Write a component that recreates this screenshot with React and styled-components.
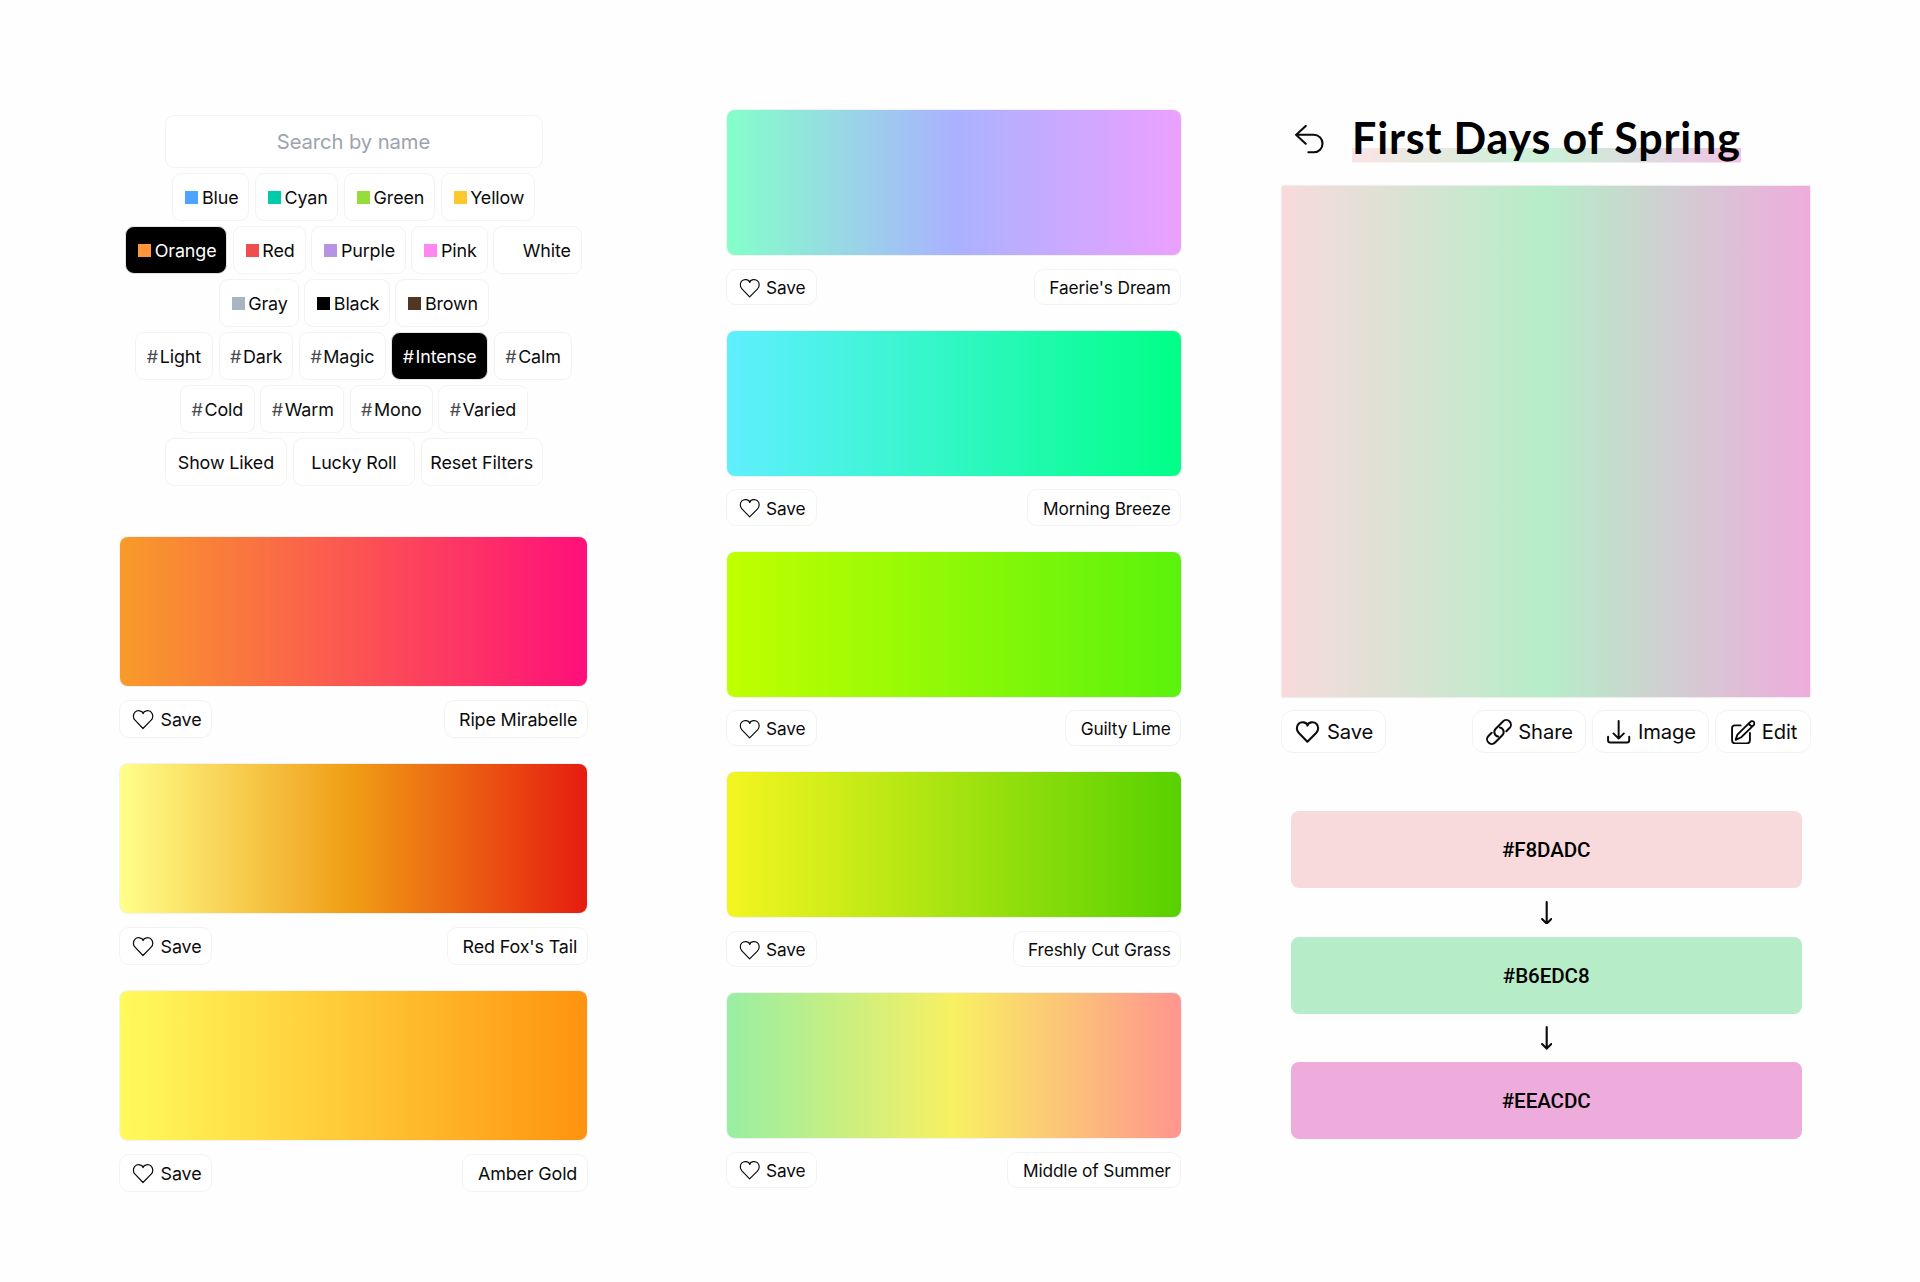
import React from "react";
import styled, { createGlobalStyle, css } from "styled-components";

const GlobalStyle = createGlobalStyle`
  *, *::before, *::after { box-sizing: border-box; }
  body {
    margin: 0;
    background: #fefefe;
    color: #0b0b0c;
    font-family: Inter, "Liberation Sans", sans-serif;
  }
  button, input { font: inherit; color: inherit; margin: 0; }
`;

const Page = styled.main`
  display: grid;
  grid-template-columns: 505.5px 453.5px 528.4px;
  column-gap: 101.5px;
  justify-content: start;
  align-items: start;
  height: 1282px;
  padding-left: 120px;
  overflow: hidden;
`;

const outlined = css`
  border: 1px solid #f3f3f4;
  background: #fff;
`;

/* ---------- Filters ---------- */

const BrowseColumn = styled.section`
  display: flex;
  flex-direction: column;
  width: 467px;
  padding-top: 115px;
`;

const Filters = styled.div`
  display: flex;
  flex-direction: column;
  align-items: center;
  gap: 5.6px;
  margin-bottom: 51.5px;
`;

const SearchInput = styled.input`
  ${outlined}
  width: 378px;
  height: 52.8px;
  border-radius: 9px;
  padding: 0;
  text-align: center;
  font-size: 20.2px;
  letter-spacing: -0.08px;
  outline: none;
  &::placeholder { color: #9ca3af; opacity: 1; }
`;

const FilterRow = styled.div`
  display: flex;
  gap: 5.6px;
  margin-left: 0.6px;
`;

const Chip = styled.button`
  ${outlined}
  display: flex;
  align-items: center;
  flex: none;
  justify-content: ${(p) => (p.$centered ? "center" : "flex-start")};
  width: ${(p) => p.$width}px;
  height: 47.4px;
  padding: 1px 0 0 ${(p) => (p.$centered ? 0 : p.$tag ? 8.8 : 12)}px;
  border-radius: 9px;
  font-size: 17.9px;
  letter-spacing: -0.12px;
  white-space: nowrap;
  ${(p) =>
    p.$active &&
    css`
      background: #000;
      border-color: #e4e4e6;
      color: #fff;
    `}
`;

const Swatch = styled.span`
  width: 13px;
  height: 13px;
  margin-right: 3.6px;
  margin-top: -1px;
  background: ${(p) => p.$color};
`;

const Hash = styled.span`
  width: 14.6px;
  color: ${(p) => (p.$active ? "#fff" : "#4b4b4f")};
`;

/* ---------- Gradient cards ---------- */

const CardList = styled.div`
  display: flex;
  flex-direction: column;
  gap: ${(p) => (p.$compact ? 25.9 : 26.3)}px;
  padding-top: ${(p) => (p.$compact ? 110.3 : 0)}px;
`;

const Card = styled.article`
  display: flex;
  flex-direction: column;
  gap: ${(p) => (p.$compact ? 13.5 : 13.8)}px;
`;

const Preview = styled.div`
  height: ${(p) => (p.$compact ? 145 : 149.2)}px;
  border-radius: 8px;
  background: ${(p) => p.$gradient};
  box-shadow: 0 0 1.5px rgba(0, 0, 0, 0.25);
`;

const CardBar = styled.div`
  display: flex;
  justify-content: space-between;
  margin: 0 -0.8px;
`;

const CardButton = styled.button`
  ${outlined}
  display: flex;
  align-items: center;
  gap: ${(p) => (p.$compact ? 2.8 : 3.6)}px;
  height: ${(p) => (p.$compact ? 36.3 : 37.7)}px;
  padding: 1px ${(p) => (p.$icon ? 10 : 9.6)}px 0 ${(p) => (p.$icon ? 8.6 : 14.5)}px;
  border-radius: 10px;
  font-size: ${(p) => (p.$compact ? 17.3 : 17.9)}px;
  letter-spacing: -0.13px;
  white-space: nowrap;
`;

/* ---------- Detail ---------- */

const DetailColumn = styled.section`
  padding-top: 111px;
  display: flex;
  flex-direction: column;
`;

const TitleRow = styled.header`
  display: flex;
  align-items: flex-start;
  height: 75.3px;
  padding-left: 13px;
`;

const BackButton = styled.button`
  border: 0;
  padding: 14px 0 0;
  background: none;
  margin-right: 28.5px;
  display: flex;
`;

const Title = styled.h1`
  margin: 0;
  width: 388.6px;
  height: 51.5px;
  font: 700 43px/53px Lato, sans-serif;
  letter-spacing: 0.82px;
  color: #000;
  white-space: nowrap;
  background: linear-gradient(90deg, #f8dadcb8, #b6edc8b8, #eeacdcb8) no-repeat 0 100% / 100% 14.5px;
`;

const BigPreview = styled.div`
  height: 511px;
  background: linear-gradient(90deg, #f8dadc, #b6edc8, #eeacdc);
  box-shadow: 0 0 2px rgba(0, 0, 0, 0.2);
`;

const ActionBar = styled.div`
  display: flex;
  gap: 6.3px;
  margin: 12.7px -0.6px 58.7px -0.9px;
`;

const ActionButton = styled.button`
  ${outlined}
  display: flex;
  align-items: center;
  flex: none;
  gap: ${(p) => p.$gap}px;
  width: ${(p) => p.$width}px;
  height: 42.7px;
  padding: 1px 0 0 ${(p) => p.$inset}px;
  border-radius: 12px;
  font-size: 20.2px;
  letter-spacing: -0.12px;
  white-space: nowrap;
  &:first-child { margin-right: auto; }
`;

const Stops = styled.div`
  display: flex;
  flex-direction: column;
  align-items: center;
  padding: 0 8.6px;
`;

const Stop = styled.div`
  display: flex;
  align-items: center;
  justify-content: center;
  width: 100%;
  height: 77px;
  padding-top: 1px;
  border-radius: 8px;
  background: ${(p) => p.$color};
  font: 500 20.6px/24px Roboto, sans-serif;
  letter-spacing: -0.1px;
  color: #000;
`;

const StopArrow = styled.div`
  display: flex;
  align-items: center;
  height: 48.5px;
`;

const Icon = styled.svg.attrs({ preserveAspectRatio: "none" })`
  display: block;
  flex: none;
  fill: none;
  stroke: currentColor;
  stroke-linecap: round;
  stroke-linejoin: round;
`;

const HeartIcon = ({ size, stroke }) => (
  <Icon width={size} height={size} viewBox="0 0 21 21" strokeWidth={stroke}>
    <path d="m10.5 6.5c.5-2.5 4.366-2.887 6-1.206 1.614 1.66 1.614 4.338 0 5.998l-6.079 6.208-5.921-6.208c-1.614-1.66-1.614-4.338 0-5.998 1.634-1.68 5.5-1.294 6 1.206z" />
  </Icon>
);

const BackIcon = () => (
  <Icon width="28.6" height="28.7" viewBox="0 0 80 86" strokeWidth="6">
    <path d="M30 3 3 29.5 30 56M3 29.5H52C67 29.5 77 41 77 55.5S67 82 52 82H37.5" />
  </Icon>
);

const LinkIcon = () => (
  <Icon width="26" height="26" viewBox="0 -0.5 78 78" strokeWidth="6">
    <g transform="translate(39 38.5) rotate(-45)">
      <path d="M17 14H30.7A14 14 0 0 0 30.7-14H0A14 14 0 0 0-11.5 8" />
      <path d="M-17-14H-30.7A14 14 0 0 0-30.7 14H0A14 14 0 0 0 11.5-8" />
    </g>
  </Icon>
);

const DownloadIcon = () => (
  <Icon width="23.3" height="23.5" viewBox="0 0 65 69" strokeWidth="5.5">
    <path d="M32.5 3V54M18 39.5 32.5 54.500 47 39.5M3 49V60Q3 66 9 66H56Q62 66 62 60V49" />
  </Icon>
);

const EditIcon = () => (
  <Icon width="24.3" height="24.3" viewBox="0 0 68 72" strokeWidth="5.3">
    <path d="M27 16H11Q3 16 3 24V61Q3 69 11 69H45Q53 69 53 61V38" />
    <path d="M13 59 18 43 52 8C56 3 60 2 63 5C67 9 66 13 62 17L29 51ZM49 11 59 20" />
  </Icon>
);

const ArrowIcon = () => (
  <Icon width="11.4" height="23.7" viewBox="0 0 32 71" strokeWidth="6">
    <path d="M16 3V68M3 54 16 68 29 54" />
  </Icon>
);

const filterRows = [
  [
    { label: "Blue", color: "#4da3ff", width: 77 },
    { label: "Cyan", color: "#00cba9", width: 83.5 },
    { label: "Green", color: "#96dd3b", width: 91 },
    { label: "Yellow", color: "#ffc72e", width: 94.7 },
  ],
  [
    { label: "Orange", color: "#ff963c", width: 102, active: true },
    { label: "Red", color: "#f04e4e", width: 73 },
    { label: "Purple", color: "#b794e2", width: 94.5 },
    { label: "Pink", color: "#ff87ef", width: 76.2 },
    { label: "White", color: "#ffffff", width: 89.2 },
  ],
  [
    { label: "Gray", color: "#a8b4c0", width: 80 },
    { label: "Black", color: "#000000", width: 85.5 },
    { label: "Brown", color: "#513624", width: 93.7 },
  ],
  [
    { label: "Light", width: 77.7 },
    { label: "Dark", width: 74.7 },
    { label: "Magic", width: 86.7 },
    { label: "Intense", width: 97, active: true },
    { label: "Calm", width: 78.5 },
  ],
  [
    { label: "Cold", width: 74.7 },
    { label: "Warm", width: 83.7 },
    { label: "Mono", width: 83 },
    { label: "Varied", width: 89.3 },
  ],
];

const leftCards = [
  { name: "Ripe Mirabelle", gradient: "linear-gradient(90deg, #f89b29, #ff0f7b)" },
  { name: "Red Fox's Tail", gradient: "linear-gradient(90deg, #ffff8a, #f09c14, #e61c10)" },
  { name: "Amber Gold", gradient: "linear-gradient(90deg, #fffb5c, #ff930f)" },
];

const middleCards = [
  { name: "Faerie's Dream", gradient: "linear-gradient(90deg, #84ffc9, #aab2ff, #eca0ff)" },
  { name: "Morning Breeze", gradient: "linear-gradient(90deg, #60efff, #00ff87)" },
  { name: "Guilty Lime", gradient: "linear-gradient(90deg, #c0ff00, #5af20c)" },
  { name: "Freshly Cut Grass", gradient: "linear-gradient(90deg, #f4f520, #57d100)" },
  { name: "Middle of Summer", gradient: "linear-gradient(90deg, #98eea2, #f8f062, #ff958f)" },
];

const stops = ["#F8DADC", "#B6EDC8", "#EEACDC"];

function GradientCards({ items, compact }) {
  return (
    <CardList $compact={compact}>
      {items.map((item) => (
        <Card key={item.name} $compact={compact}>
          <Preview $compact={compact} $gradient={item.gradient} />
          <CardBar>
            <CardButton $compact={compact} $icon>
              <HeartIcon size={compact ? 27.5 : 28.2} stroke={0.9} />
              Save
            </CardButton>
            <CardButton $compact={compact}>{item.name}</CardButton>
          </CardBar>
        </Card>
      ))}
    </CardList>
  );
}

export default function App() {
  return (
    <>
      <GlobalStyle />
      <Page>
        <BrowseColumn>
          <Filters>
            <SearchInput placeholder="Search by name" />
            {filterRows.map((row) => (
              <FilterRow key={row[0].label}>
                {row.map((f) => (
                  <Chip key={f.label} $width={f.width} $active={f.active} $tag={!f.color}>
                    {f.color ? <Swatch $color={f.color} /> : <Hash $active={f.active}>#</Hash>}
                    {f.label}
                  </Chip>
                ))}
              </FilterRow>
            ))}
            <FilterRow>
              {["Show Liked", "Lucky Roll", "Reset Filters"].map((label) => (
                <Chip key={label} $width={122.3} $centered>
                  {label}
                </Chip>
              ))}
            </FilterRow>
          </Filters>
          <GradientCards items={leftCards} />
        </BrowseColumn>

        <GradientCards items={middleCards} compact />

        <DetailColumn>
          <TitleRow>
            <BackButton aria-label="Back">
              <BackIcon />
            </BackButton>
            <Title>First Days of Spring</Title>
          </TitleRow>
          <BigPreview />
          <ActionBar>
            <ActionButton $width={105.3} $inset={9.6} $gap={4.3}>
              <HeartIcon size={31} stroke={1.4} />
              Save
            </ActionButton>
            <ActionButton $width={114} $inset={13.2} $gap={6.2}>
              <LinkIcon />
              Share
            </ActionButton>
            <ActionButton $width={116.8} $inset={14} $gap={7.4}>
              <DownloadIcon />
              Image
            </ActionButton>
            <ActionButton $width={95.7} $inset={14.5} $gap={6.6}>
              <EditIcon />
              Edit
            </ActionButton>
          </ActionBar>
          <Stops>
            {stops.map((hex, i) => (
              <React.Fragment key={hex}>
                {i > 0 && (
                  <StopArrow>
                    <ArrowIcon />
                  </StopArrow>
                )}
                <Stop $color={hex}>{hex}</Stop>
              </React.Fragment>
            ))}
          </Stops>
        </DetailColumn>
      </Page>
    </>
  );
}
